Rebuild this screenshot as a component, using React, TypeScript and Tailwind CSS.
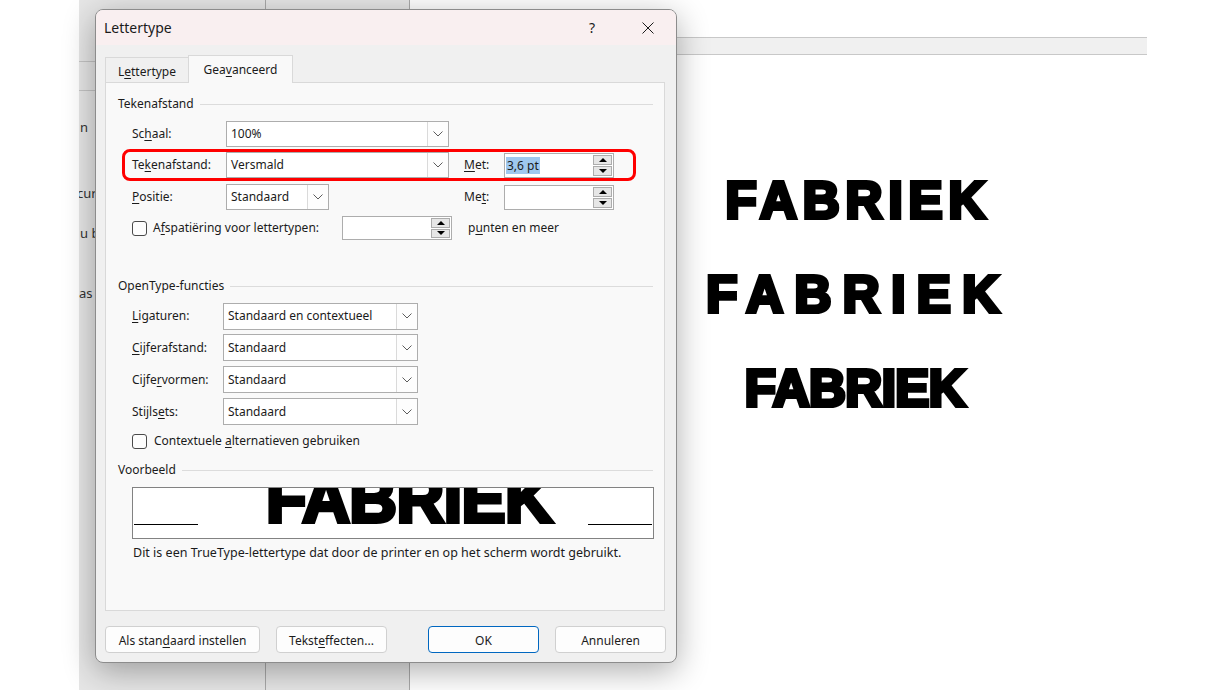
import React from "react";

const U = ({ children }: { children: React.ReactNode }) => (
  <span className="underline decoration-[1px] underline-offset-[2px]">{children}</span>
);

function Chevron() {
  return (
    <svg width="10" height="6" viewBox="0 0 10 6" className="block">
      <path d="M0.5 0.5 L5 5 L9.5 0.5" fill="none" stroke="#5c5c5c" strokeWidth="1" />
    </svg>
  );
}

function Select({ cls, value }: { cls: string; value: string }) {
  return (
    <div className={`${cls} flex shrink-0 border border-[#adadad] bg-white`}>
      <div className="flex flex-1 items-center overflow-hidden whitespace-nowrap pl-[4px]">{value}</div>
      <div className="flex w-[21px] items-center justify-center border-l border-[#dadada] bg-[#fdfdfd]">
        <Chevron />
      </div>
    </div>
  );
}

function Spin({ cls, children }: { cls: string; children?: React.ReactNode }) {
  return (
    <div className={`${cls} flex shrink-0 border border-[#adadad] bg-white`}>
      <div className="flex flex-1 items-center pl-[1px]">{children}</div>
      <div className="flex w-[21px] flex-col gap-px p-[1px]">
        <div className="flex flex-1 items-center justify-center border border-[#acacac] bg-[#e6e6e6]">
          <svg width="8" height="4" viewBox="0 0 8 4" className="block">
            <polygon points="0,4 4,0 8,4" fill="#000" />
          </svg>
        </div>
        <div className="flex flex-1 items-center justify-center border border-[#acacac] bg-[#e6e6e6]">
          <svg width="8" height="4" viewBox="0 0 8 4" className="block">
            <polygon points="0,0 8,0 4,4" fill="#000" />
          </svg>
        </div>
      </div>
    </div>
  );
}

function Check() {
  return <div className="h-[15px] w-[15px] shrink-0 rounded-[3px] border border-[#4a4a4a] bg-[#fdfdfd]" />;
}

function Section({ children }: { children: React.ReactNode }) {
  return (
    <div className="flex h-[16px] items-center">
      <span>{children}</span>
      <div className="ml-[6px] h-px flex-1 bg-[#dcdcdc]" />
    </div>
  );
}

function Btn({ cls, children }: { cls: string; children: React.ReactNode }) {
  return (
    <div className={`${cls} flex h-[27px] shrink-0 items-center justify-center rounded-[4px] bg-[#fdfdfd] pt-[2px]`}>
      {children}
    </div>
  );
}

export default function App() {
  return (
    <div className="relative h-[690px] w-[1227px] overflow-hidden bg-white font-['Noto_Sans',sans-serif] text-[#1b1b1b]">
      {/* background application */}
      <div className="flex h-full">
        <div className="w-[79px] shrink-0 bg-white" />
        <div className="flex w-[331px] shrink-0 bg-[#e6e6e6]">
          <div className="flex w-[187px] flex-col overflow-hidden border-r border-[#a9a9a9] text-[13px] leading-[16px] text-[#333]">
            <div className="h-[62px] shrink-0 border-b border-[#c4c4c4]" />
            <div className="h-[29px] shrink-0 border-b border-[#c4c4c4]" />
            <div className="mt-[28px] pl-[1px]">n</div>
            <div className="ml-[-2px] mt-[50px]">cur</div>
            <div className="mt-[24px] pl-[1px]">u b</div>
            <div className="mt-[44px]">as</div>
          </div>
          <div className="w-[144px] border-r border-[#a9a9a9]" />
        </div>
        <div className="flex flex-1 bg-white">
          <div className="w-[160px] shrink-0" />
          <div className="flex w-[577px] shrink-0 flex-col">
            <div className="mt-[37px] h-[18px] shrink-0 border-y border-[#c8c8c8] bg-[#f0f0f0]" />
            <div className="mt-[99px] flex flex-col items-center font-['Liberation_Sans',Arial,sans-serif] text-[51px] font-bold leading-[94px] text-black [-webkit-text-stroke:4px_#000]">
              <div className="tracking-[6px]">FABRIEK</div>
              <div className="tracking-[11.5px]">FABRIEK</div>
              <div className="mr-[7px] tracking-[-0.5px]">FABRIEK</div>
            </div>
          </div>
        </div>
      </div>

      {/* dialog */}
      <div className="absolute left-[95px] top-[9px] flex h-[654px] w-[582px] flex-col overflow-hidden rounded-[8px] border border-[#8c8c8c] bg-[#f0f0f0] text-[12px] leading-[16px] shadow-[0_8px_32px_rgba(0,0,0,0.32)]">
        <div className="flex h-[35px] shrink-0 items-center bg-[#f9eff0] pl-[8px] pr-[22px]">
          <span className="text-[14px]">Lettertype</span>
          <div className="flex-1" />
          <span className="text-[14px]">?</span>
          <svg className="ml-[47px] block" width="12" height="12" viewBox="0 0 12 12">
            <path d="M0.5 0.5 L11.5 11.5 M11.5 0.5 L0.5 11.5" stroke="#1b1b1b" strokeWidth="1" fill="none" />
          </svg>
        </div>

        <div className="flex flex-col pl-[9px] pt-[10px]">
          {/* tabs */}
          <div className="flex h-[27px] items-end">
            <div className="flex h-[25px] w-[83px] items-center justify-center border-l border-t border-[#d9d9d9] bg-[#f0f0f0] pt-[3px]">
              <span>
                L<U>e</U>ttertype
              </span>
            </div>
            <div className="relative z-10 mb-[-1px] flex h-[28px] w-[105px] items-center justify-center border-x border-t border-[#d9d9d9] bg-[#f9f9f9]">
              <span>
                Gea<U>v</U>anceerd
              </span>
            </div>
          </div>

          {/* panel */}
          <div className="relative flex h-[529px] w-[560px] flex-col border border-[#d9d9d9] bg-[#f9f9f9] pl-[12px] pr-[11px] pt-[13px]">
            <Section>Tekenafstand</Section>
            <div className="mt-[9px] flex flex-col gap-[5px] pl-[14px]">
              <div className="flex h-[26px] items-center">
                <div className="w-[94px] shrink-0">
                  Sc<U>h</U>aal:
                </div>
                <Select cls="w-[223px] h-[26px]" value="100%" />
              </div>
              <div className="flex h-[26px] items-center">
                <div className="w-[94px] shrink-0">
                  Te<U>k</U>enafstand:
                </div>
                <Select cls="w-[223px] h-[26px]" value="Versmald" />
                <div className="ml-[15px] w-[40px] shrink-0">
                  <U>M</U>et:
                </div>
                <Spin cls="w-[110px] h-[25px]">
                  <span className="bg-[#9fc8ef] px-[1px] leading-[17px]">3,6 pt</span>
                </Spin>
              </div>
              <div className="mt-[1px] flex h-[26px] items-center">
                <div className="w-[94px] shrink-0">
                  <U>P</U>ositie:
                </div>
                <Select cls="w-[103px] h-[26px]" value="Standaard" />
                <div className="w-[120px] shrink-0" />
                <div className="ml-[15px] w-[40px] shrink-0">
                  Me<U>t</U>:
                </div>
                <Spin cls="w-[110px] h-[25px]" />
              </div>
              <div className="flex h-[26px] items-center">
                <Check />
                <div className="ml-[6px] w-[189px] shrink-0">
                  A<U>f</U>spatiëring voor lettertypen:
                </div>
                <Spin cls="w-[110px] h-[24px]" />
                <div className="ml-[16px]">
                  p<U>u</U>nten en meer
                </div>
              </div>
            </div>

            <div className="mt-[37px]">
              <Section>OpenType-functies</Section>
            </div>
            <div className="mt-[8px] flex flex-col gap-[5px] pl-[14px]">
              <div className="flex h-[27px] items-center pt-[1px]">
                <div className="w-[91px] shrink-0">
                  <U>L</U>igaturen:
                </div>
                <Select cls="w-[195px] h-[27px]" value="Standaard en contextueel" />
              </div>
              <div className="flex h-[27px] items-center">
                <div className="w-[91px] shrink-0">
                  <U>C</U>ijferafstand:
                </div>
                <Select cls="w-[195px] h-[27px]" value="Standaard" />
              </div>
              <div className="flex h-[27px] items-center">
                <div className="w-[91px] shrink-0">
                  Cijfe<U>r</U>vormen:
                </div>
                <Select cls="w-[195px] h-[27px]" value="Standaard" />
              </div>
              <div className="flex h-[27px] items-center">
                <div className="w-[91px] shrink-0">
                  Stijls<U>e</U>ts:
                </div>
                <Select cls="w-[195px] h-[27px]" value="Standaard" />
              </div>
            </div>
            <div className="mt-[8px] flex h-[16px] items-center pl-[14px]">
              <Check />
              <div className="ml-[7px]">
                Contextuele <U>a</U>lternatieven gebruiken
              </div>
            </div>

            <div className="mt-[13px]">
              <Section>Voorbeeld</Section>
            </div>
            <div className="ml-[14px] mt-[9px] flex h-[52px] w-[522px] items-end overflow-hidden border border-[#828282] bg-white">
              <div className="mb-[13px] ml-[1px] h-px w-[64px] shrink-0 bg-black" />
              <div className="ml-[68px] shrink-0 whitespace-nowrap pb-[6px] font-['Liberation_Sans',Arial,sans-serif] text-[66px] font-bold leading-none tracking-[-0.5px] text-black [-webkit-text-stroke:4px_#000]">
                FABRIEK
              </div>
              <div className="flex-1" />
              <div className="mb-[13px] mr-[1px] h-px w-[64px] shrink-0 bg-black" />
            </div>
            <div className="mt-[6px] pl-[15px] text-[12.5px]">
              Dit is een TrueType-lettertype dat door de printer en op het scherm wordt gebruikt.
            </div>

            {/* annotation */}
            <div className="pointer-events-none absolute left-[16px] top-[66px] h-[32px] w-[514px] rounded-[8px] border-[3px] border-[#ff0000]" />
          </div>

          {/* buttons */}
          <div className="mt-[15px] flex">
            <Btn cls="w-[155px] border border-[#d0d0d0]">
              <span>
                Als stan<U>d</U>aard instellen
              </span>
            </Btn>
            <Btn cls="ml-[16px] w-[111px] border border-[#d0d0d0]">
              <span>
                Tekst<U>e</U>ffecten...
              </span>
            </Btn>
            <Btn cls="ml-[41px] w-[111px] border-[1.5px] border-[#0067c0]">
              <span>OK</span>
            </Btn>
            <Btn cls="ml-[16px] w-[111px] border border-[#d0d0d0]">
              <span>Annuleren</span>
            </Btn>
          </div>
        </div>
      </div>
    </div>
  );
}
